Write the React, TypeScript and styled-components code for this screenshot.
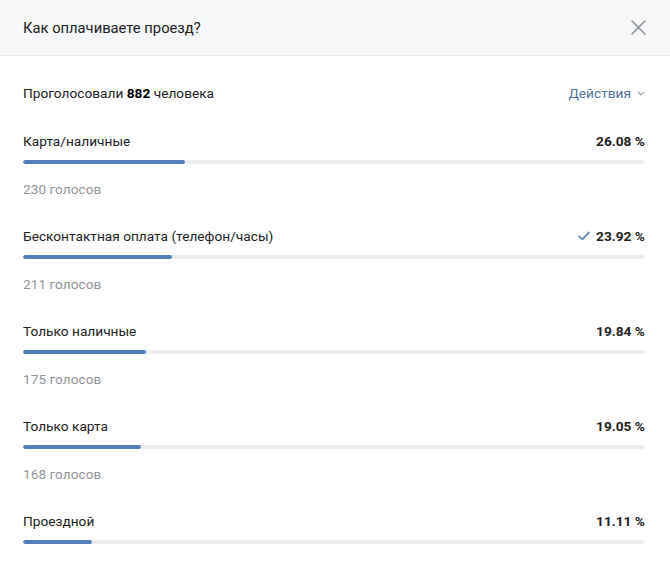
import React from "react";
import styled, { createGlobalStyle } from "styled-components";

const Global = createGlobalStyle`
  html, body { margin: 0; padding: 0; background: #fff; }
  body { font-family: Roboto, "Noto Sans", "DejaVu Sans", sans-serif; color: #222; -webkit-font-smoothing: antialiased; }
`;

const Modal = styled.div`
  width: 670px;
  background: #fff;
`;

const Header = styled.div`
  height: 56px;
  box-sizing: border-box;
  background: #f7f8fa;
  border-bottom: 1px solid #e7e8ec;
  display: flex;
  align-items: center;
  justify-content: space-between;
  padding: 0 24px 0 23px;
`;

const Title = styled.div`
  font-size: 14.75px;
  line-height: 18px;
  color: #222;
`;

const CloseButton = styled.button`
  border: 0;
  background: none;
  padding: 0;
  width: 16px;
  height: 16px;
  display: flex;
  align-items: center;
  justify-content: center;
  cursor: pointer;
`;

const Body = styled.div`
  padding: 28px 25px 0 23px;
`;

const Summary = styled.div`
  display: flex;
  justify-content: space-between;
  align-items: center;
  font-size: 13.7px;
  line-height: 18px;
  color: #222;
`;

const Strong = styled.b`
  font-weight: 700;
  color: #000;
`;

const Actions = styled.div`
  display: flex;
  align-items: center;
  gap: 6px;
  color: #4f73a0;
  cursor: pointer;
`;

const Option = styled.div<{ $first?: boolean }>`
  margin-top: ${(p) => (p.$first ? 30 : 29)}px;
`;

const OptionRow = styled.div`
  display: flex;
  justify-content: space-between;
  align-items: center;
  font-size: 13.7px;
  line-height: 18px;
`;

const Percent = styled.div`
  display: flex;
  align-items: center;
  gap: 6px;
  font-weight: 700;
  color: #222;
`;

const Track = styled.div`
  margin-top: 10px;
  height: 4px;
  border-radius: 2px;
  background: #edeef0;
  overflow: hidden;
`;

const Fill = styled.div`
  height: 100%;
  background: #5181b8;
  border-radius: 2px;
`;

const Votes = styled.div`
  margin-top: 16px;
  font-size: 13.7px;
  line-height: 18px;
  color: #939699;
`;

const options = [
  { label: "Карта/наличные", pct: 26.08, votes: "230 голосов" },
  { label: "Бесконтактная оплата (телефон/часы)", pct: 23.92, votes: "211 голосов", mine: true },
  { label: "Только наличные", pct: 19.84, votes: "175 голосов" },
  { label: "Только карта", pct: 19.05, votes: "168 голосов" },
  { label: "Проездной", pct: 11.11, votes: "98 голосов" },
];

export default function App() {
  return (
    <>
      <Global />
      <Modal>
        <Header>
          <Title>Как оплачиваете проезд?</Title>
          <CloseButton aria-label="Закрыть">
            <svg width="15" height="15" viewBox="0 0 15 15">
              <path d="M1 1L14 14M14 1L1 14" stroke="#8f9398" strokeWidth="1.6" strokeLinecap="round" />
            </svg>
          </CloseButton>
        </Header>
        <Body>
          <Summary>
            <span>
              Проголосовали <Strong>882</Strong> человека
            </span>
            <Actions>
              Действия
              <svg width="8" height="5" viewBox="0 0 8 5">
                <path d="M1 1L4 4L7 1" stroke="#9aa4b0" strokeWidth="1.1" fill="none" strokeLinecap="round" strokeLinejoin="round" />
              </svg>
            </Actions>
          </Summary>
          {options.map((o, i) => (
            <Option key={o.label} $first={i === 0}>
              <OptionRow>
                <span>{o.label}</span>
                <Percent>
                  {o.mine && (
                    <svg width="12" height="10" viewBox="0 0 12 10">
                      <path d="M1 5.2L4.3 8.4L11 1.4" stroke="#5181b8" strokeWidth="1.6" fill="none" strokeLinecap="round" strokeLinejoin="round" />
                    </svg>
                  )}
                  {o.pct.toFixed(2)} %
                </Percent>
              </OptionRow>
              <Track>
                <Fill style={{ width: `${o.pct}%` }} />
              </Track>
              {i < options.length - 1 && <Votes>{o.votes}</Votes>}
            </Option>
          ))}
        </Body>
      </Modal>
    </>
  );
}
